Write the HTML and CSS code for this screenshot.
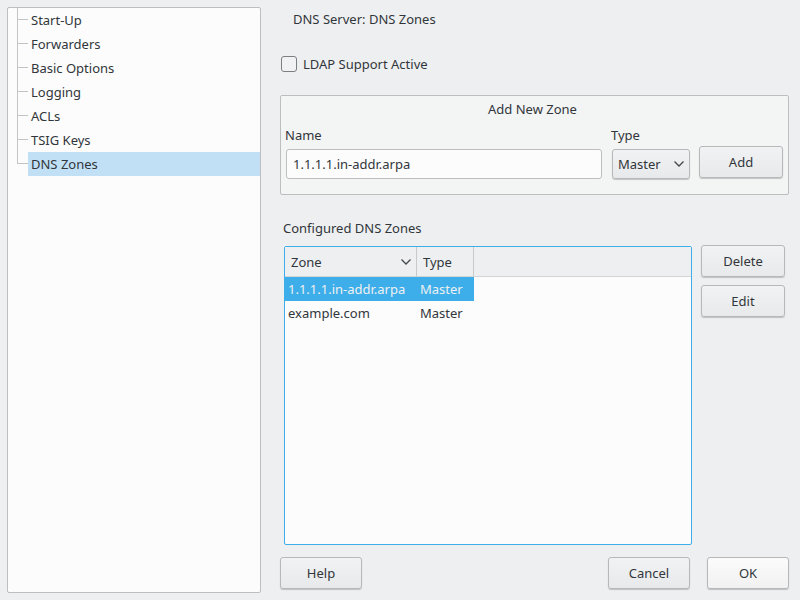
FILE: index.html
```html
<!DOCTYPE html>
<html lang="en">
<head>
<meta charset="utf-8">
<title>DNS Server: DNS Zones</title>
<link rel="stylesheet" href="styles.css">
</head>
<body>
<nav class="sidebar" aria-label="DNS Server">
  <ul class="tree">
    <li><a href="#startup">Start-Up</a></li>
    <li><a href="#forwarders">Forwarders</a></li>
    <li><a href="#basic">Basic Options</a></li>
    <li><a href="#logging">Logging</a></li>
    <li><a href="#acls">ACLs</a></li>
    <li><a href="#tsig">TSIG Keys</a></li>
    <li><a href="#zones" class="current" aria-current="page">DNS Zones</a></li>
  </ul>
</nav>
<main class="content">
  <h1 class="title">DNS Server: DNS Zones</h1>
  <div class="check">
    <input type="checkbox" id="ldap">
    <label for="ldap">LDAP Support Active</label>
  </div>
  <section class="panel">
    <h2 class="panel-title">Add New Zone</h2>
    <form class="new-zone">
      <div class="field field-name">
        <label for="name">Name</label>
        <input type="text" id="name" value="1.1.1.1.in-addr.arpa">
      </div>
      <div class="field field-type">
        <label for="type">Type</label>
        <div class="select-box">
          <select id="type"><option>Master</option><option>Slave</option><option>Forward</option></select>
          <svg class="chevron" viewBox="0 0 10 6" width="10" height="6" aria-hidden="true"><path d="M.5 .5 5 5 9.500 .5"/></svg>
        </div>
      </div>
      <button type="button" class="btn">Add</button>
    </form>
  </section>
  <h2 class="zones-title" id="zones-title">Configured DNS Zones</h2>
  <section class="zones">
    <div class="table-frame">
      <table aria-labelledby="zones-title">
        <thead>
          <tr>
            <th class="col-zone"><span class="sort">Zone
              <svg class="chevron-icon" viewBox="0 0 10 6" width="10" height="6" aria-hidden="true"><path d="M.5 .5 5 5 9.500 .5"/></svg></span></th>
            <th class="col-type">Type</th>
            <td class="col-rest"></td>
          </tr>
        </thead>
        <tbody>
          <tr class="selected"><td>1.1.1.1.in-addr.arpa</td><td>Master</td></tr>
          <tr><td>example.com</td><td>Master</td></tr>
        </tbody>
      </table>
    </div>
    <div class="zone-actions">
      <button type="button" class="btn">Delete</button>
      <button type="button" class="btn">Edit</button>
    </div>
  </section>
  <footer class="footer">
    <button type="button" class="btn help">Help</button>
    <button type="button" class="btn">Cancel</button>
    <button type="button" class="btn default">OK</button>
  </footer>
</main>
</body>
</html>
```
FILE: styles.css
```css
* {
  box-sizing: border-box;
}

body {
  display: flex;
  gap: 19px;
  min-height: 100vh;
  margin: 0;
  padding: 7px 11px 7px 7px;
  background: #eeeff1;
  color: #31363b;
  font: 13px/18px "Noto Sans", sans-serif;
}

button,
input,
select {
  margin: 0;
  color: inherit;
  font: inherit;
}

h1,
h2 {
  margin: 0;
  font-size: 13px;
  font-weight: 400;
}

/* Section tree */
.sidebar {
  flex: 0 0 254px;
  border: 1px solid #bcbebf;
  border-radius: 2px;
  background: #fcfcfc;
}

.tree {
  margin: 0;
  padding: 0 0 0 9px;
  list-style: none;
}

.tree li {
  position: relative;
  padding-left: 11px;
}

.tree li::before,
.tree li::after {
  position: absolute;
  top: 0;
  left: 0;
  content: "";
}

.tree li::before {
  width: 1px;
  height: 100%;
  background: #c3c4c5;
}

.tree li:last-child::before {
  height: 12px;
}

.tree li::after {
  top: 11px;
  width: 11px;
  height: 1px;
  background: #c3c4c5;
}

.tree a {
  display: block;
  padding: 0 3px;
  color: inherit;
  line-height: 24px;
  text-decoration: none;
}

.tree .current {
  background: #c1e0f5;
}

/* Main column */
.content {
  display: flex;
  flex: 1;
  flex-direction: column;
  min-width: 0;
}

.title {
  padding: 3px 13px 0;
}

.check {
  display: flex;
  align-items: center;
  gap: 6px;
  margin: 27px 0 22px 1px;
}

.check input {
  width: 16px;
  height: 16px;
  border: 1px solid #7c7f82;
  border-radius: 3px;
  background: #f1f2f3;
  appearance: none;
}

.check input:checked {
  background: #3daee9;
}

.panel {
  padding: 4px 5px 15px;
  border: 1px solid #bcbebf;
  border-radius: 2px;
  background: #f3f4f4;
}

.panel-title {
  padding-right: 4px;
  text-align: center;
}

.new-zone {
  display: flex;
  align-items: flex-end;
}

.field {
  margin-top: 8px;
}

.field label {
  display: block;
  margin: 0 -1px 5px;
}

.field-name {
  flex: 1;
  margin-right: 10px;
}

.field-name input {
  width: 100%;
  height: 30px;
  padding: 0 6px;
  border: 1px solid #bcbebf;
  border-radius: 3px;
  background: #fcfcfc;
}

.field-type {
  width: 78px;
  margin-right: 9px;
}

.select-box {
  position: relative;
}

.select-box select {
  display: block;
  width: 100%;
  height: 30px;
  padding: 0 5px;
  border: 1px solid #b6b8ba;
  border-radius: 3px;
  background: linear-gradient(#f1f2f3, #e8e9ea);
  box-shadow: 0 1px 1px rgba(0, 0, 0, .2);
  appearance: none;
}

.chevron,
.chevron-icon {
  fill: none;
  stroke: #43484d;
  stroke-width: 1.3;
}

.chevron {
  position: absolute;
  top: 12px;
  right: 6px;
  pointer-events: none;
}

.btn {
  min-width: 82px;
  height: 32px;
  padding: 0 6px;
  border: 1px solid #b6b8ba;
  border-radius: 3px;
  background: linear-gradient(#f1f2f3, #e8e9ea);
  box-shadow: 0 1px 1px rgba(0, 0, 0, .2);
}

.new-zone .btn,
.zone-actions .btn {
  min-width: 84px;
}

.new-zone .btn {
  margin-bottom: 1px;
}

.btn.default {
  background: linear-gradient(#fbfbfb, #f1f1f2);
}

/* Zone list */
.zones-title {
  margin: 24px 3px 8px;
}

.zones {
  display: flex;
  flex: 1;
  gap: 9px;
  margin: 0 4px 12px;
}

.table-frame {
  flex: 1;
  margin-top: 1px;
  border: 1px solid #3daee9;
  border-radius: 2px;
  background: #fcfcfc;
}

table {
  width: 100%;
  border-spacing: 0;
  table-layout: fixed;
}

thead th,
thead td {
  height: 30px;
  padding: 0 6px;
  border-right: 1px solid #c8c9ca;
  border-bottom: 1px solid #d4d5d6;
  background: #eeeff1;
  font-weight: 400;
  text-align: left;
}

thead .col-rest {
  border-right: 0;
}

.col-zone {
  width: 132px;
}

.col-type {
  width: 57px;
}

.sort {
  display: flex;
  align-items: center;
  justify-content: space-between;
}

.sort svg {
  margin-right: -1px;
}

tbody td {
  height: 24px;
  padding: 0 3px;
  white-space: nowrap;
}

.selected td {
  background: #3daee9;
  color: #eff0f1;
}

.zone-actions {
  display: flex;
  flex-direction: column;
  gap: 8px;
}

.footer {
  display: flex;
  gap: 17px;
  margin-bottom: 4px;
}

.help {
  margin-right: auto;
}
```
